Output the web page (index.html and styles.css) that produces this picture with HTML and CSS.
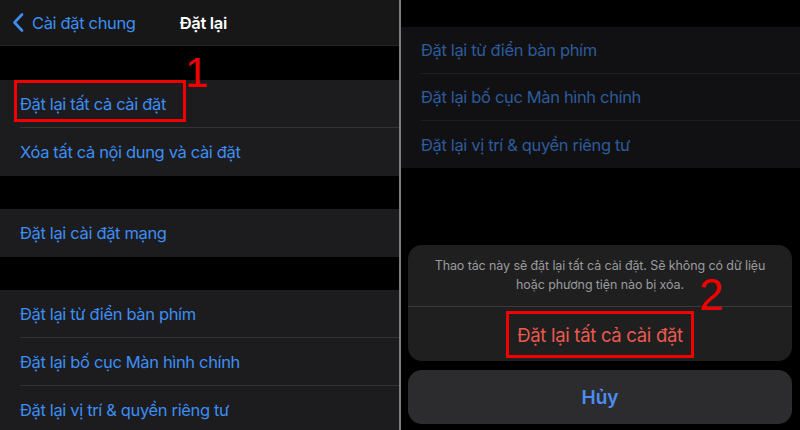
FILE: index.html
```html
<!DOCTYPE html>
<html lang="vi">
<head>
    <meta charset="UTF-8">
    <meta name="viewport" content="width=device-width, initial-scale=1.0">
    <title>Đặt lại</title>
    <link rel="stylesheet" href="styles.css">
</head>
<body>
    <div class="screen left">
        <header class="navbar">
            <a class="back" href="#">
                <svg width="12" height="19" viewBox="0 0 12 19">
                    <path d="M10 1.5 L2.5 9.5 L10 17.5" fill="none" stroke="#3d8ef5" stroke-width="2.6" stroke-linecap="round" stroke-linejoin="round"/>
                </svg>
                <span>Cài đặt chung</span>
            </a>
            <div class="title">Đặt lại</div>
        </header>

        <div class="group first">
            <div class="row">
                <div class="row-inner">Đặt lại tất cả cài đặt</div>
                <div class="mark mark-one"></div>
                <div class="step step-one">1</div>
            </div>
            <div class="row">
                <div class="row-inner">Xóa tất cả nội dung và cài đặt</div>
            </div>
        </div>

        <div class="group">
            <div class="row">
                <div class="row-inner">Đặt lại cài đặt mạng</div>
            </div>
        </div>

        <div class="group">
            <div class="row">
                <div class="row-inner">Đặt lại từ điển bàn phím</div>
            </div>
            <div class="row">
                <div class="row-inner">Đặt lại bố cục Màn hình chính</div>
            </div>
            <div class="row">
                <div class="row-inner">Đặt lại vị trí &amp; quyền riêng tư</div>
            </div>
        </div>
    </div>

    <div class="divider"></div>

    <div class="screen right">
        <div class="group dim">
            <div class="row">
                <div class="row-inner">Đặt lại từ điển bàn phím</div>
            </div>
            <div class="row">
                <div class="row-inner">Đặt lại bố cục Màn hình chính</div>
            </div>
            <div class="row">
                <div class="row-inner">Đặt lại vị trí &amp; quyền riêng tư</div>
            </div>
        </div>

        <div class="sheet">
            <div class="sheet-box">
                <p class="sheet-msg">Thao tác này sẽ đặt lại tất cả cài đặt. Sẽ không có dữ liệu<br>hoặc phương tiện nào bị xóa.</p>
                <div class="sheet-action">
                    <span class="action-label">Đặt lại tất cả cài đặt</span>
                    <div class="step step-two">2</div>
                </div>
            </div>
            <div class="sheet-cancel">Hủy</div>
        </div>
    </div>
</body>
</html>
```

FILE: styles.css
```css
* {
    margin: 0;
    padding: 0;
    box-sizing: border-box;
}

body {
    width: 800px;
    height: 430px;
    overflow: hidden;
    display: flex;
    background: #000;
    font-family: Inter, "Noto Sans", "Liberation Sans", sans-serif;
    -webkit-font-smoothing: antialiased;
}

.screen {
    width: 399px;
    height: 430px;
    position: relative;
    overflow: hidden;
}

.divider {
    width: 2px;
    background: #7d7d7d;
}

/* nav bar */
.navbar {
    height: 46px;
    display: flex;
    align-items: center;
    background: #171718;
    border-bottom: 1px solid #262628;
    padding-left: 12px;
}

.back {
    display: flex;
    align-items: center;
    gap: 8px;
    color: #3d8ef5;
    text-decoration: none;
    font-size: 16.5px;
    letter-spacing: -0.35px;
}

.title {
    margin-left: 44px;
    color: #fff;
    font-size: 16.5px;
    font-weight: 600;
    letter-spacing: -0.3px;
}

/* list rows */
.group {
    margin-top: 33px;
    background: #1c1c1e;
}

.group.first {
    margin-top: 34px;
}

.row {
    position: relative;
    height: 48px;
    display: flex;
    padding-left: 20px;
}

.row-inner {
    flex: 1;
    display: flex;
    align-items: center;
    color: #3d8ef5;
    font-size: 16.5px;
    letter-spacing: -0.35px;
    border-bottom: 1px solid #333336;
}

.row:last-child .row-inner {
    border-bottom: none;
}

.right .group.dim {
    margin-top: 27px;
    background: #111113;
}

.dim .row {
    height: 47px;
}

.dim .row-inner {
    color: #2d5b9c;
    border-bottom-color: #1e1e21;
}

/* red annotations */
.mark {
    position: absolute;
    border: 3px solid #f20000;
}

.mark-one {
    left: 14px;
    top: 0;
    width: 172px;
    height: 42px;
}

.step {
    position: absolute;
    color: #f20000;
    font-family: "Liberation Sans", Arial, sans-serif;
    line-height: 1;
}

.step-one {
    left: 185px;
    top: -28px;
    font-size: 42px;
}

/* action sheet */
.sheet {
    position: absolute;
    left: 7px;
    right: 8px;
    bottom: 6px;
    display: flex;
    flex-direction: column;
    gap: 9px;
}

.sheet-box {
    background: #1f1f20;
    border-radius: 14px;
}

.sheet-msg {
    height: 62px;
    padding: 11px 10px 0;
    text-align: center;
    color: #9b9b9e;
    font-size: 12.5px;
    line-height: 19px;
    letter-spacing: -0.1px;
    border-bottom: 1px solid #3a3a3c;
}

.sheet-action {
    position: relative;
    height: 54px;
    display: flex;
    align-items: flex-start;
    justify-content: center;
    padding-top: 4px;
}

.action-label {
    height: 47px;
    display: flex;
    align-items: center;
    padding: 0 8px;
    border: 3px solid #f20000;
    color: #ea5a4d;
    font-size: 18.5px;
    letter-spacing: -0.3px;
}

.step-two {
    left: 291px;
    top: -34px;
    font-size: 44px;
}

.sheet-cancel {
    height: 54px;
    display: flex;
    align-items: center;
    justify-content: center;
    background: #2c2c2e;
    border-radius: 14px;
    color: #4b8df0;
    font-size: 19px;
    font-weight: 600;
}
```
